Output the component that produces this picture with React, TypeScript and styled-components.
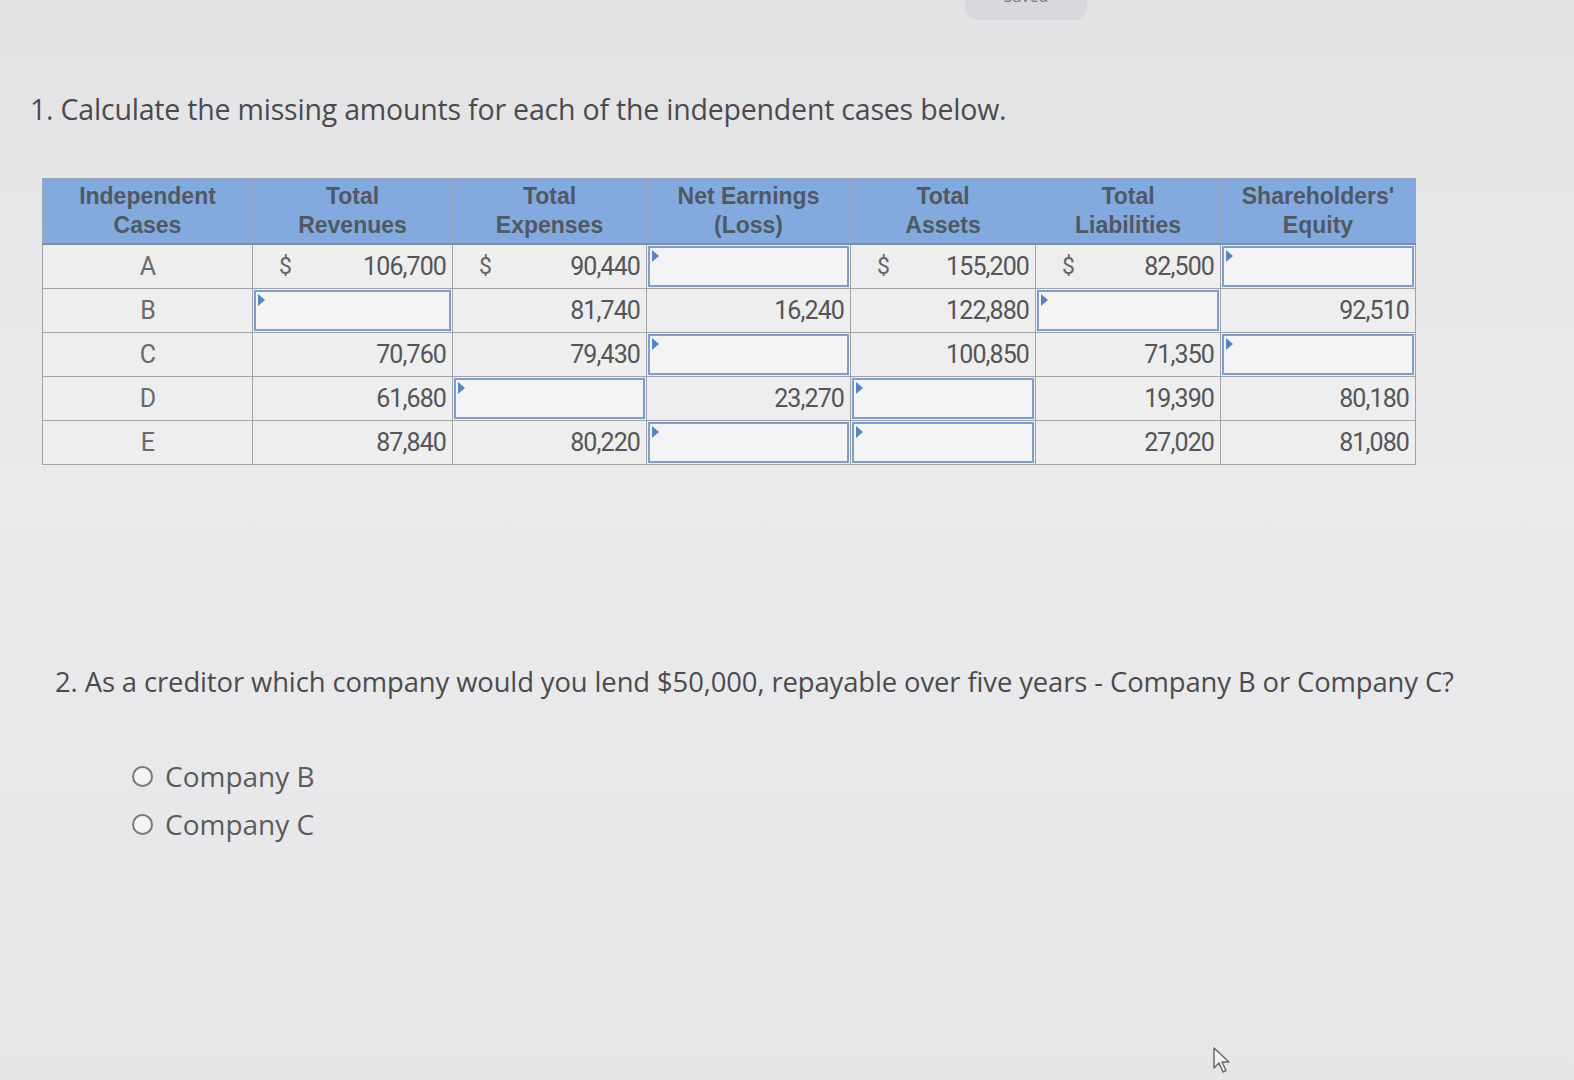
import React from "react";
import styled, { createGlobalStyle } from "styled-components";

const Global = createGlobalStyle`
  html, body { margin: 0; padding: 0; background: #e5e5e8; }
  body { font-family: "Open Sans", Lato, sans-serif; color: #4d4d4f; }
  #root { min-height: 1080px; }
`;

const Page = styled.div`
  position: relative;
  width: 1574px;
  height: 1080px;
  overflow: hidden;
  background: linear-gradient(180deg, #e3e3e6 0%, #ebebed 45%, #e6e6e8 100%);
`;

const TopBar = styled.div`
  display: flex;
  padding-left: 965px;
  height: 20px;
`;

const SavedPill = styled.div`
  width: 122px;
  height: 38px;
  margin-top: -18px;
  border-radius: 12px;
  background: #d9d8dc;
  color: #7a7a7d;
  font-size: 16px;
  display: flex;
  align-items: flex-end;
  justify-content: center;
  padding-bottom: 16px;
  box-sizing: border-box;
  overflow: hidden;
  line-height: 1;
`;

const Title = styled.h2`
  margin: 70px 0 0 30px;
  font-weight: 400;
  font-size: 28.5px;
  line-height: 38px;
  letter-spacing: -0.2px;
  color: #4b4b4e;
`;

const Table = styled.table`
  margin: 50px 0 0 42px;
  border-collapse: collapse;
  table-layout: fixed;
  font-family: Roboto, "Liberation Sans", sans-serif;
  background: #eeeeef;
`;

const HeadCell = styled.th`
  background: #83aade;
  color: #505962;
  font-family: "Liberation Sans", Arial, sans-serif;
  font-weight: 700;
  font-size: 23px;
  line-height: 29px;
  height: 64px;
  padding: 0 4px;
  border: 1px solid #9aa7b8;
  border-bottom: 2px solid #7f8fa3;
  vertical-align: middle;
`;

const Cell = styled.td`
  height: 43px;
  padding: 0;
  border: 1px solid #a2a2a6;
  font-size: 25px;
  color: #555558;
  letter-spacing: -0.9px;
  position: relative;
`;

const CaseCell = styled(Cell)`
  text-align: center;
  color: #6a6a6d;
`;

const Value = styled.div`
  display: flex;
  align-items: center;
  justify-content: space-between;
  height: 43px;
  padding: 0 6px 0 26px;
`;

const Dollar = styled.span`
  color: #666669;
  font-size: 23px;
`;

const InputBox = styled.div`
  position: absolute;
  inset: 1px;
  background: #f4f4f5;
  border: 2px solid #7d9fcf;
  box-sizing: border-box;
`;

const Marker = styled.span`
  position: absolute;
  top: 2px;
  left: 2px;
  width: 0;
  height: 0;
  border-top: 6px solid transparent;
  border-bottom: 6px solid transparent;
  border-left: 7px solid #4f86cf;
`;

const Question = styled.p`
  margin: 198px 0 0 55px;
  font-size: 27.4px;
  line-height: 38px;
  letter-spacing: -0.1px;
  color: #4b4b4e;
`;

const Options = styled.div`
  display: flex;
  flex-direction: column;
  gap: 10px;
  margin: 56px 0 0 132px;
`;

const Option = styled.label`
  display: flex;
  align-items: center;
  gap: 12px;
  font-size: 28px;
  line-height: 38px;
  color: #5b5b5e;
`;

const Radio = styled.span`
  width: 17px;
  height: 17px;
  border: 2px solid #7a7a7d;
  border-radius: 50%;
  background: #f3f3f4;
`;

const Cursor = styled.svg`
  position: absolute;
  left: 1212px;
  top: 1046px;
`;

type CellData = { v?: string; d?: boolean; input?: boolean };

const cols = [
  { w: 210, label: ["Independent", "Cases"] },
  { w: 200, label: ["Total", "Revenues"] },
  { w: 194, label: ["Total", "Expenses"] },
  { w: 204, label: ["Net Earnings", "(Loss)"] },
  { w: 185, label: ["Total", "Assets"] },
  { w: 185, label: ["Total", "Liabilities"] },
  { w: 195, label: ["Shareholders'", "Equity"] },
];

const rows: { id: string; cells: CellData[] }[] = [
  {
    id: "A",
    cells: [
      { v: "106,700", d: true },
      { v: "90,440", d: true },
      { input: true },
      { v: "155,200", d: true },
      { v: "82,500", d: true },
      { input: true },
    ],
  },
  {
    id: "B",
    cells: [{ input: true }, { v: "81,740" }, { v: "16,240" }, { v: "122,880" }, { input: true }, { v: "92,510" }],
  },
  {
    id: "C",
    cells: [{ v: "70,760" }, { v: "79,430" }, { input: true }, { v: "100,850" }, { v: "71,350" }, { input: true }],
  },
  {
    id: "D",
    cells: [{ v: "61,680" }, { input: true }, { v: "23,270" }, { input: true }, { v: "19,390" }, { v: "80,180" }],
  },
  {
    id: "E",
    cells: [{ v: "87,840" }, { v: "80,220" }, { input: true }, { input: true }, { v: "27,020" }, { v: "81,080" }],
  },
];

export default function App() {
  return (
    <Page>
      <Global />
      <TopBar>
        <SavedPill>Saved</SavedPill>
      </TopBar>
      <Title>1. Calculate the missing amounts for each of the independent cases below.</Title>
      <Table>
        <colgroup>
          {cols.map((c, i) => (
            <col key={i} style={{ width: c.w }} />
          ))}
        </colgroup>
        <thead>
          <tr>
            {cols.map((c, i) => (
              <HeadCell key={i}>
                {c.label[0]}
                <br />
                {c.label[1]}
              </HeadCell>
            ))}
          </tr>
        </thead>
        <tbody>
          {rows.map((r) => (
            <tr key={r.id}>
              <CaseCell>{r.id}</CaseCell>
              {r.cells.map((c, i) => (
                <Cell key={i}>
                  {c.input ? (
                    <InputBox>
                      <Marker />
                    </InputBox>
                  ) : (
                    <Value>
                      <Dollar>{c.d ? "$" : ""}</Dollar>
                      <span>{c.v}</span>
                    </Value>
                  )}
                </Cell>
              ))}
            </tr>
          ))}
        </tbody>
      </Table>
      <Question>
        2. As a creditor which company would you lend $50,000, repayable over five years - Company B or Company C?
      </Question>
      <Options>
        <Option>
          <Radio />
          Company B
        </Option>
        <Option>
          <Radio />
          Company C
        </Option>
      </Options>
      <Cursor width="22" height="30" viewBox="0 0 22 30">
        <path d="M2 2 L2 22 L7 17 L11 26 L14 24.5 L10 16 L17 16 Z" fill="#f2f2f2" stroke="#6b6b6e" strokeWidth="1.5" strokeLinejoin="round" />
      </Cursor>
    </Page>
  );
}
